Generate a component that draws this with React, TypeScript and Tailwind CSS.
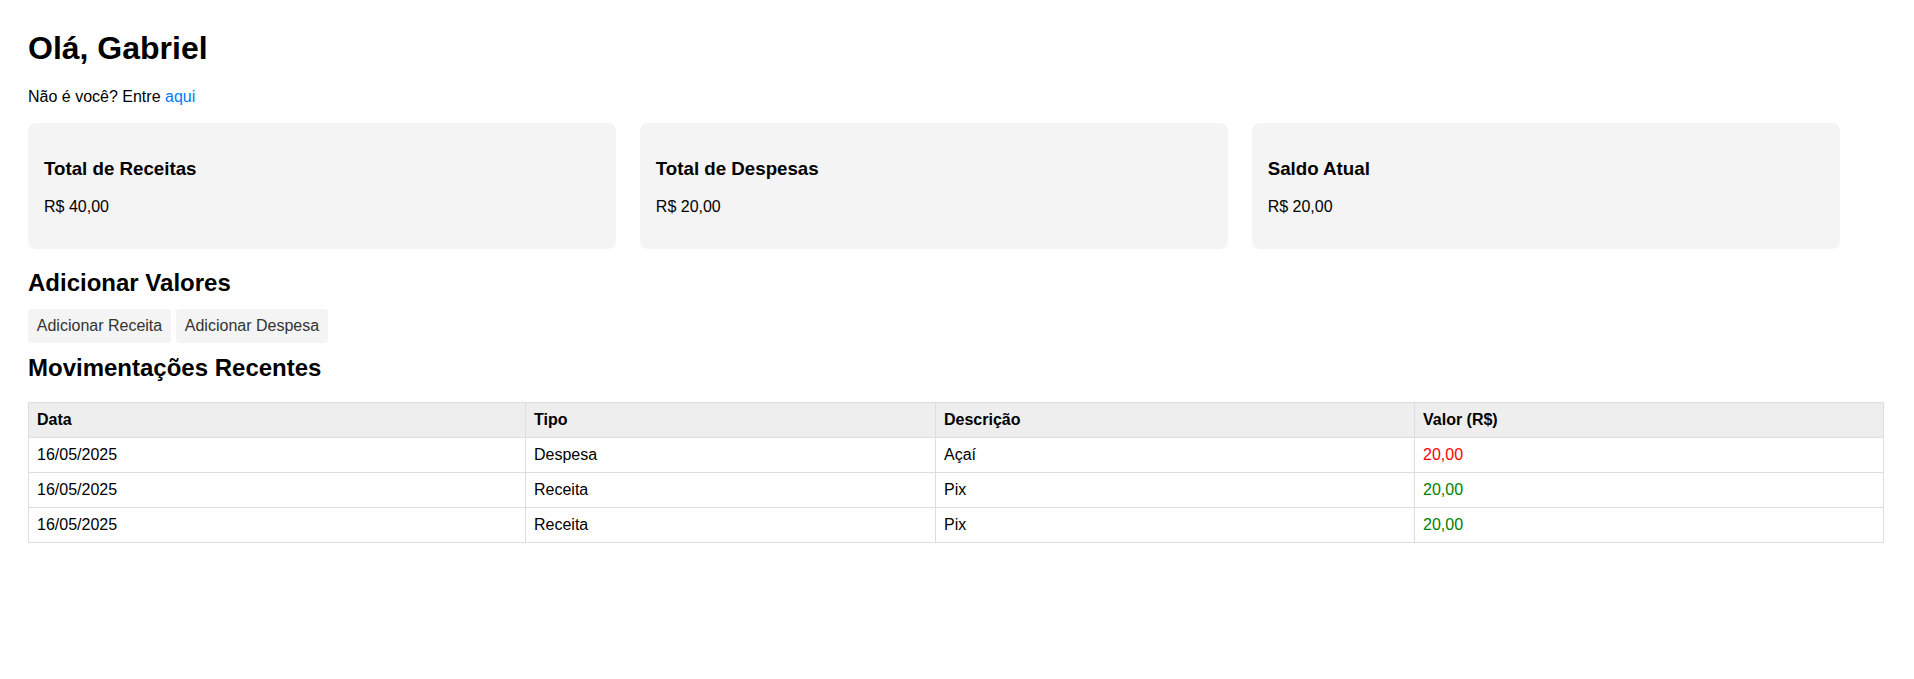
const font = { fontFamily: '"Liberation Sans", Arial, sans-serif' };

const cards = [
  { title: "Total de Receitas", value: "R$ 40,00" },
  { title: "Total de Despesas", value: "R$ 20,00" },
  { title: "Saldo Atual", value: "R$ 20,00" },
];

const rows = [
  { date: "16/05/2025", type: "Despesa", desc: "Açaí", value: "20,00", color: "text-[#ff0000]" },
  { date: "16/05/2025", type: "Receita", desc: "Pix", value: "20,00", color: "text-[#008000]" },
  { date: "16/05/2025", type: "Receita", desc: "Pix", value: "20,00", color: "text-[#008000]" },
];

function Card({ title, value }: { title: string; value: string }) {
  return (
    <div className="rounded-lg bg-[#f4f4f4] p-4">
      <h3 className="my-[18.72px] text-[18.72px] font-bold leading-[21.5px]">{title}</h3>
      <p className="mb-4 text-base leading-[18.4px]">{value}</p>
    </div>
  );
}

export default function App() {
  return (
    <div className="min-h-[679px] bg-white px-[28px] pt-[30px] text-black" style={font}>
      <h1 className="mb-[21.5px] text-[32px] font-bold leading-[36.8px]">Olá, Gabriel</h1>
      <p className="mb-[16.7px] text-base leading-[18.4px]">
        Não é você? Entre{" "}
        <a href="#" className="text-[#007bff]">
          aqui
        </a>
      </p>

      <div className="grid w-[1812px] grid-cols-3 gap-[23.5px]">
        {cards.map((c) => (
          <Card key={c.title} {...c} />
        ))}
      </div>

      <h2 className="mt-[20px] mb-[12.5px] text-2xl font-bold leading-[27.6px]">Adicionar Valores</h2>
      <div className="flex gap-[5px]">
        <button className="rounded bg-[#f4f4f4] px-[8.8px] py-2 text-base leading-[18.4px] text-[#333]">
          Adicionar Receita
        </button>
        <button className="rounded bg-[#f4f4f4] px-[8.8px] py-2 text-base leading-[18.4px] text-[#333]">
          Adicionar Despesa
        </button>
      </div>

      <h2 className="mt-[11px] mb-[20.3px] text-2xl font-bold leading-[27.6px]">Movimentações Recentes</h2>
      <table className="w-[1856px] table-fixed border-collapse text-base leading-[18px]">
        <thead>
          <tr className="bg-[#eeeeee]">
            <th className="w-[497px] border border-[#dddddd] p-2 text-left font-bold">Data</th>
            <th className="w-[410px] border border-[#dddddd] p-2 text-left font-bold">Tipo</th>
            <th className="w-[479px] border border-[#dddddd] p-2 text-left font-bold">Descrição</th>
            <th className="border border-[#dddddd] p-2 text-left font-bold">Valor (R$)</th>
          </tr>
        </thead>
        <tbody>
          {rows.map((r, i) => (
            <tr key={i}>
              <td className="border border-[#dddddd] p-2">{r.date}</td>
              <td className="border border-[#dddddd] p-2">{r.type}</td>
              <td className="border border-[#dddddd] p-2">{r.desc}</td>
              <td className={`border border-[#dddddd] p-2 ${r.color}`}>{r.value}</td>
            </tr>
          ))}
        </tbody>
      </table>
    </div>
  );
}
